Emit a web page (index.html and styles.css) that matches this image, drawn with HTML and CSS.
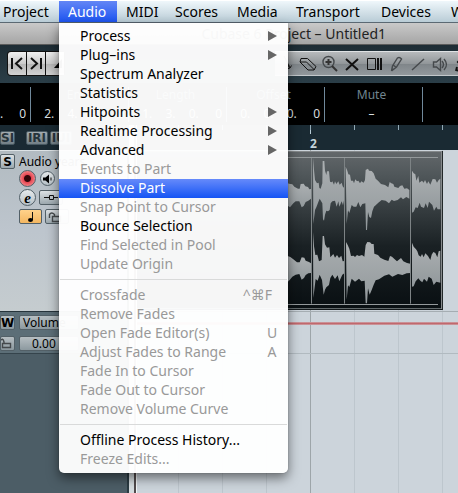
FILE: index.html
```html
<!DOCTYPE html>
<html lang="en">
<head>
<meta charset="utf-8">
<title>Cubase 6 Project</title>
<link rel="stylesheet" href="styles.css">
</head>
<body>
<nav class="menubar">
  <button>Project</button><button class="open">Audio</button><button>MIDI</button><button>Scores</button><button>Media</button><button>Transport</button><button>Devices</button><button>Window</button>
</nav>

<div class="menu" role="menu">
  <button class="item sub">Process</button>
  <button class="item sub">Plug–ins</button>
  <button class="item">Spectrum Analyzer</button>
  <button class="item">Statistics</button>
  <button class="item sub">Hitpoints</button>
  <button class="item sub">Realtime Processing</button>
  <button class="item sub">Advanced</button>
  <button class="item" disabled>Events to Part</button>
  <button class="item selected">Dissolve Part</button>
  <button class="item" disabled>Snap Point to Cursor</button>
  <button class="item">Bounce Selection</button>
  <button class="item" disabled>Find Selected in Pool</button>
  <button class="item" disabled>Update Origin</button>
  <hr>
  <button class="item" disabled>Crossfade <kbd class="combo">^⌘F</kbd></button>
  <button class="item" disabled>Remove Fades</button>
  <button class="item" disabled>Open Fade Editor(s) <kbd>U</kbd></button>
  <button class="item" disabled>Adjust Fades to Range <kbd>A</kbd></button>
  <button class="item" disabled>Fade In to Cursor</button>
  <button class="item" disabled>Fade Out to Cursor</button>
  <button class="item" disabled>Remove Volume Curve</button>
  <hr>
  <button class="item">Offline Process History...</button>
  <button class="item" disabled>Freeze Edits...</button>
</div>

<header class="titlebar">Cubase 6 Project – Untitled1</header>

<div class="toolbar">
  <div class="locators">
    <button aria-label="Previous"><svg width="18" height="23" viewBox="0 0 18 23"><path d="M4 6v11M14 6l-6 5.500 6 5.500" class="bold"/></svg></button>
    <button aria-label="Next"><svg width="18" height="23" viewBox="0 0 18 23"><path d="M14 6v11M4 6l6 5.500-6 5.500" class="bold"/></svg></button>
    <button aria-label="Cycle"><svg width="18" height="23" viewBox="0 0 18 23"><path d="M8 16l8-9v9z"/></svg></button>
  </div>
  <div class="tools">
    <button aria-label="Split"><svg width="22" height="24" viewBox="0 0 22 24"><path d="M9 4l6 12 1.500-2.500M15 16l-3 1 2-4" class="thin"/></svg></button>
    <button aria-label="Erase"><svg width="22" height="24" viewBox="0 0 22 24"><path d="M4 6.500h6.500l8.500 8-2 3.500h-6L3 10zM3 10h6.500l8 8" class="thin"/></svg></button>
    <button aria-label="Zoom"><svg width="22" height="24" viewBox="0 0 22 24"><circle cx="9.500" cy="10" r="5.500" class="grey"/><path d="M6.500 10h6M9.500 7v6" class="bold soft"/><path d="M13 14l5 5" class="bold soft"/></svg></button>
    <button aria-label="Mute"><svg width="22" height="24" viewBox="0 0 22 24"><path d="M5 7l12 11M17 7L5 18" class="bold"/></svg></button>
    <button aria-label="Comp"><svg width="22" height="24" viewBox="0 0 22 24"><path d="M4.500 6.500h8v11h-8z" class="thin"/><path d="M15 6v12M18 6v12" class="bold"/></svg></button>
    <button aria-label="Draw"><svg width="22" height="24" viewBox="0 0 22 24"><path d="M6.500 19l1-5 5-8q2-1.500 4 1l-5 8-5 4M8 13l3.500 2.500M6.500 19l2-2" class="grey"/></svg></button>
    <button aria-label="Line"><svg width="22" height="24" viewBox="0 0 22 24"><path d="M5 18L17 7" class="grey"/></svg></button>
    <button aria-label="Play"><svg width="22" height="24" viewBox="0 0 22 24"><path d="M4.500 10v5h3l4 3.500v-12L7.500 10z" class="grey"/><path d="M13 9q3 3.500 0 7M15 7q5 5.500 0 11" class="grey"/></svg></button>
    <button aria-label="Color"><svg width="22" height="24" viewBox="0 0 22 24"><path d="M11 6l-4 4 4 4M6 15l-1 4M5 18l4 1" class="bold"/></svg></button>
  </div>
</div>

<div class="infoline">
  <div class="info first"><b></b><p><span>0.</span><span>0</span></p></div>
  <div class="info"><b>End</b><p><span>2.</span><span>4.</span><span>3.</span><span>0</span></p></div>
  <div class="info"><b>Length</b><p><span>1.</span><span>3.</span><span>0.</span><span>0</span></p></div>
  <div class="info"><b>Offset</b><p><span>0.</span><span>0.</span><span>0.</span><span>0</span></p></div>
  <div class="info single"><b>Mute</b><p><span>–</span></p></div>
  <div class="info last"></div>
</div>

<main class="workspace">
  <section class="tracklist">
    <div class="listhead"><button class="cut">SI</button><button>IRI</button><button>IUI</button></div>
    <div class="track">
      <button class="key">S</button>
      <div class="controls">
        <div class="name">Audio years</div>
        <div class="row">
          <button class="round rec" aria-label="Record"></button>
          <button class="round monitor" aria-label="Monitor"><svg width="14" height="14" viewBox="0 0 14 14"><path d="M3 5.500h2.500L9 2.500v9L5.500 8.500H3z"/><path d="M11 5.500v3" class="thin"/></svg></button>
        </div>
        <div class="row">
          <button class="round edit">e</button>
          <button class="small" aria-label="Lanes"><svg width="22" height="13" viewBox="0 0 22 13"><path d="M4 6.500h5M13 6.500h5M9.500 4.500h4v4h-4z" class="thin"/></svg></button>
        </div>
        <div class="row">
          <button class="small note" aria-label="Musical mode"><svg width="21" height="13" viewBox="0 0 21 13"><path d="M12.500 2v8" class="thin"/><ellipse cx="10.500" cy="10" rx="2.500" ry="2"/></svg></button>
          <button class="small" aria-label="Lock"><svg width="22" height="13" viewBox="0 0 22 13"><path d="M3.500 8V4.500q2-3 5 0V6.500M6.500 6.500h8v5h-8z" class="grey"/></svg></button>
        </div>
      </div>
    </div>
    <div class="automation">
      <button class="key">W</button><button class="field">Volume</button>
      <button class="key" aria-label="Lock"><svg width="14" height="13" viewBox="0 0 14 13"><path d="M-1 4q3-4 4 1v2M1.500 6.500h8v4h-8z" class="grey"/></svg></button><button class="field value">0.00</button>
    </div>
  </section>
  <div class="splitter"></div>
  <section class="arrange">
    <div class="ruler"><span class="bar">2</span></div>
    <div class="lanes">
      <div class="event">
        <svg width="155" height="159" viewBox="24 93 465 477">
          <defs><linearGradient id="w" x2="0" y2="1"><stop offset="0" stop-color="#adb1b3"/><stop offset="1" stop-color="#91989b"/></linearGradient></defs>
          <g fill="url(#w)">
            <path d="M24 188L30 191 40 193 46 200 57 206 62 206 65 192 74 191 79 199 87 201 91 208 96 207V236L88 242 80 246 74 258 68 262 61 244 50 244 43 250 33 262 28 258 24 265Z"/>
            <path d="M102 114L105 150 108 180 114 190 119 188 121 204 125 206 130 190 131 123H136L138 152 142 165 144 154H150L153 185 158 187 160 184 165 194 168 184 172 192 178 184 182 194 188 188 191 199 196 205V236L192 256 188 244 181 260 178 244 173 260 168 242 160 244 155 250 152 270 147 274 142 272 138 284 135 302 132 298 130 250 122 236 118 246 112 262 108 270 103 312Z"/>
            <path d="M200 140L205 152 208 163 213 164 216 182 222 182 225 190 229 178 234 184 238 182 243 190 247 184 254 188 258 180 260 150 264 148 267 146 270 152 278 153 284 160 290 176 297 182 306 192 318 195 328 202 332 186 337 190 343 192 346 200 358 204 363 198 370 196 376 206 384 205 391 210V236L382 231 372 238 366 232 356 240 345 243 338 239 330 250 320 242 308 240 298 248 290 256 285 260 280 274 276 294 271 291 267 276 264 330H261L259 250 250 252 244 262 238 246 232 260 224 260 218 255 211 279 207 271 203 312Z"/>
            <path d="M399 152L404 160 409 163 412 182 418 168 421 188 429 182 434 188 438 180 444 192 448 184 454 194 461 177 469 178 474 188 479 180 484 176V268L476 268 472 260 465 272 460 255 450 245 446 264 440 250 435 264 426 260 422 248 416 264 410 262 404 275 399 278Z"/>
            <path d="M24 407L34 411 42 417 54 427 62 427 68 412 76 413 80 422 90 426 96 430V459L88 460 80 465 75 474 68 479 61 462 50 464 40 470 32 480 26 486 24 484Z"/>
            <path d="M102 336L105 379 109 405 115 404 120 424 128 420 131 348H135L138 373 144 383 151 382 154 412 163 402 168 413 174 405 180 414 187 407 191 424 196 423V460L190 464 181 484 176 466 168 477 160 464 154 474 150 495 142 502 138 509 134 524 129 480 122 464 116 482 110 477 103 534Z"/>
            <path d="M201 366L206 375 211 386 216 408 224 407 228 411 234 405 240 408 249 405 256 410 260 375 265 366 273 367 278 372 284 372 286 401 297 405 304 413 316 419 328 423 333 408 339 410 347 418 354 424 366 414 373 424 384 429 394 431V459L383 460 370 465 357 462 340 470 330 463 316 467 300 478 290 481 284 494 278 510 272 524 267 505 264 550H260L257 482 247 484 240 476 228 485 218 476 211 501 207 496 203 539Z"/>
            <path d="M399 368L404 380 411 388 415 394 419 406 425 410 429 402 434 412 439 400 447 408 454 420 458 404 463 396 469 399 475 412 479 394 484 392V488L472 485 464 495 458 476 449 470 444 485 435 476 430 487 424 482 418 475 410 484 404 499 399 500Z"/>
          </g>
          <path d="M97.500 114V551M196.500 114V551M394.500 114V551" stroke="#7d8385" stroke-width="3"/>
          <path d="M24 112.500H477M24 553.500H477" stroke="#94999b" stroke-width="3"/>
        </svg>
      </div>
      <div class="autolane"></div>
    </div>
  </section>
</main>
</body>
</html>
```
FILE: styles.css
```css
* { box-sizing: border-box; }
body {
  margin: 0;
  min-height: 100vh;
  display: flex;
  flex-direction: column;
  overflow: hidden;
  position: relative;
  font: 14px/19px "Noto Sans", "Lucida Grande", sans-serif;
  background: #4c5d66;
  color: #000;
}
button { margin: 0; padding: 0; border: 0; background: none; font: inherit; color: inherit; }
svg { display: block; }
svg .bold, svg .thin, svg .grey { fill: none; stroke: #111; }
svg .bold { stroke-width: 2; }
svg .grey { stroke: #45494c; stroke-width: 1.4; }
svg .soft { stroke: #333; }

.menubar {
  display: grid;
  grid-template-columns: 59px 58px 49px 62px 59px 85px 70px minmax(0, 1fr);
  height: 23px;
  border-top: 1px solid #fff;
  border-bottom: 1px solid #5b6973;
  background: linear-gradient(#eff7fb, #b9ccd6);
}
.menubar button { padding-left: 9px; text-align: left; line-height: 21px; white-space: nowrap; overflow: hidden; }
.menubar button:first-child { padding-left: 3px; }
.menubar .open { background: linear-gradient(#6386f5, #1d55f2); color: #fff; }

.menu {
  position: absolute;
  z-index: 2;
  top: 23px;
  left: 59px;
  width: 229px;
  padding: 4px 0;
  border-radius: 0 0 5px 5px;
  background: rgba(255, 255, 255, .965);
  box-shadow: 0 5px 12px rgba(0, 0, 0, .5), 0 0 1px rgba(0, 0, 0, .5);
}
.item {
  display: flex;
  width: 100%;
  height: 19px;
  padding: 0 5px 2px 21px;
  align-items: center;
  justify-content: space-between;
  line-height: 17px;
  white-space: nowrap;
}
.item:disabled { color: #999; }
.item.selected { background: linear-gradient(#668afa, #1554f4); color: #fff; }
.item.sub { padding-right: 11px; }
.item.sub::after {
  content: "";
  border-left: 9px solid #666;
  border-top: 5px solid transparent;
  border-bottom: 5px solid transparent;
}
.item kbd { width: 22px; font: inherit; }
.item .combo { width: auto; padding-right: 11px; font-family: "Noto Sans", "DejaVu Sans", sans-serif; }
.menu hr { height: 1px; margin: 5px 1px 6px; border: 0; background: #d9dada; }

.titlebar {
  height: 22px;
  padding-right: 72px;
  border-bottom: 1px solid #5b5b5b;
  background: linear-gradient(#c9c9c9, #a5a5a5);
  line-height: 22px;
  text-align: right;
  color: #222;
}

.toolbar {
  display: flex;
  justify-content: space-between;
  height: 38px;
  padding: 6px 0 7px 7px;
  background: linear-gradient(#1e2d35, #2b3e48);
}
.locators { display: flex; gap: 1px; padding: 1px; border-radius: 4px; background: #111; }
.locators button { width: 18px; background: linear-gradient(#f0f0f0, #cbcbcb 50%, #b5b5b5 51%, #d2d2d2); }
.locators button:first-child { border-radius: 3px 0 0 3px; }
.tools {
  display: flex;
  flex: 1;
  margin-left: 210px;
  border-top: 1px solid #dfe2e4;
  border-bottom: 1px solid #c3c8cb;
  background: linear-gradient(#b7babc, #92979a 50%, #7f8589 52%, #92989c);
  overflow: hidden;
}

.infoline { display: flex; height: 42px; padding: 4px 0 3px; background: #000; overflow: hidden; }
.info { flex: none; width: 98px; border-right: 1px solid #70899b; padding-right: 4px; color: #d7dcdf; font-size: 12px; line-height: 14px; }
.info.first { width: 31px; overflow: hidden; }
.info.last { flex: 1; border: 0; }
.info b { display: block; height: 18px; padding-top: 1px; font-weight: 400; text-align: center; color: #71858f; }
.info p { display: grid; grid-template-columns: repeat(4, 1fr); margin: 2px 0 0; text-align: right; }
.info.first p { display: flex; justify-content: flex-end; gap: 16px; }
.info.single p { display: block; text-align: center; }

.workspace { display: flex; flex: 1; }
.tracklist { flex: none; width: 127px; overflow: hidden; }
.listhead { display: flex; gap: 2px; height: 25px; padding-top: 6px; background: #1a2a33; }
.listhead button {
  width: 22px;
  height: 14px;
  border: 1px solid #475861;
  border-radius: 2px;
  background: linear-gradient(#a3abaf, #727f86);
  color: #26343b;
  font: bold 12px/12px "DejaVu Sans", sans-serif;
}
.listhead .cut { width: 15px; margin-right: 9px; }
.track {
  display: flex;
  gap: 4px;
  height: 161px;
  padding-top: 3px;
  border-top: 1px solid #dce2e5;
  background: linear-gradient(#b2bbc1, #bdc5cd 50%, #c5cccf);
}
.key, .small, .field {
  height: 15px;
  border: 1px solid #536067;
  border-radius: 2px;
  background: linear-gradient(#dce1e4, #9ca8ae);
  overflow: hidden;
}
.key { width: 15px; font: bold 12px/12px "DejaVu Sans", sans-serif; }
.name { height: 15px; font-size: 12px; line-height: 15px; white-space: nowrap; }
.row { display: flex; gap: 3px; height: 19px; align-items: center; }
.round { width: 17px; height: 17px; border: 1px solid #526068; border-radius: 50%; background: linear-gradient(#e6eaec, #b6c0c6); }
.rec { background: radial-gradient(circle, #320509 3px, #e64652 4px, #ef777d 7px); }
.monitor { width: 15px; height: 15px; margin-left: 1px; }
.monitor svg { margin-left: -1px; }
.edit { font: italic bold 15px/12px "Liberation Serif", serif; }
.small { width: 24px; }
.note { width: 23px; background: linear-gradient(#ffd28b, #f4b761); }
.automation {
  display: grid;
  grid-template-columns: 15px 1fr;
  gap: 4px;
  height: 43px;
  padding-top: 3px;
  border-top: 1px solid #26343b;
  border-bottom: 1px solid #35444c;
  background: #5c6e77;
}
.automation .key, .field { background: linear-gradient(#b6bec2, #8c999f); }
.field { width: 60px; padding-left: 3px; font-size: 12px; line-height: 13px; text-align: left; }
.value { padding-left: 12px; }
.splitter { flex: none; width: 10px; background: linear-gradient(90deg, #2b3b43 2px, #d5dcdf 2px 7px, #514b4c 7px 9px, #f3f6f7 9px); }

.arrange { flex: 1; display: flex; flex-direction: column; min-width: 0; }
.ruler {
  height: 25px;
  padding: 13px 0 0 173px;
  background:
    repeating-linear-gradient(90deg, transparent 0 41px, #92a9b5 41px 42px, transparent 42px 44px) 0 0 / 100% 5px no-repeat,
    linear-gradient(#b7cbd6, #b7cbd6) 173px 0 / 1px 9px no-repeat, #1a2a33;
}
.bar { display: block; color: #c4d4dc; font: bold 12px/12px "Noto Sans", sans-serif; }
.lanes {
  flex: 1;
  padding-top: 1px;
  background:
    linear-gradient(#9da5a9, #9da5a9) 173px 0 / 1px 100% no-repeat,
    repeating-linear-gradient(90deg, transparent 0 41px, #bdc6cd 41px 42px, transparent 42px 44px), #ccd4db;
}
.event {
  display: flex;
  justify-content: flex-end;
  width: 306px;
  height: 159px;
  border-right: 1px solid #222829;
  border-bottom: 1px solid #14191b;
  background: linear-gradient(#63686b, #50575a 15%, #1a2124 60%, #090f12);
  box-shadow: inset -1px 1px #85898b, inset 0 -1px #62696b;
}
.event svg { flex: none; }
.autolane {
  height: 43px;
  margin-top: 1px;
  border-top: 1px solid #a5adb2;
  border-bottom: 1px solid #b1bac0;
  background: linear-gradient(#d0a5aa, #c0686d 50%, #d0a5aa) 0 10px / 100% 3px no-repeat;
}
```
